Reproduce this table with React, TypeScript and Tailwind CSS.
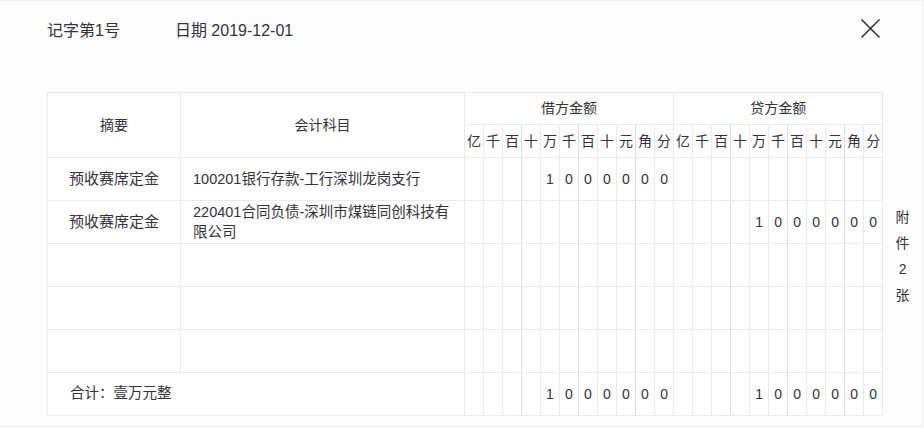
import React from "react";

const units = ["亿", "千", "百", "十", "万", "千", "百", "十", "元", "角", "分"];

// border-right colour of a unit column (index 0..10)
function unitBorder(i: number, last: boolean) {
  if (last) return "border-r-[#e6e9ee]";
  if (i === 2 || i === 5) return "border-r-[#cfe1f3]";
  if (i === 8) return "border-r-[#efd3d6]";
  return "border-r-[#e6e9ee]";
}

const amount = ["", "", "", "", "1", "0", "0", "0", "0", "0", "0"];
const empty = Array(11).fill("");

type Row = { summary: string; subject: string; debit: string[]; credit: string[] };

const rows: Row[] = [
  { summary: "预收赛席定金", subject: "100201银行存款-工行深圳龙岗支行", debit: amount, credit: empty },
  { summary: "预收赛席定金", subject: "220401合同负债-深圳市煤链同创科技有限公司", debit: empty, credit: amount },
  { summary: "", subject: "", debit: empty, credit: empty },
  { summary: "", subject: "", debit: empty, credit: empty },
  { summary: "", subject: "", debit: empty, credit: empty },
];

function AmountCells({ values, keyPrefix }: { values: string[]; keyPrefix: string }) {
  return (
    <>
      {values.map((v, i) => (
        <td
          key={keyPrefix + i}
          className={`w-[19px] border-b border-r border-b-[#e6e9ee] ${unitBorder(i, keyPrefix.startsWith("c") && i === 10)} text-center text-[14px] p-0`}
        >
          {v}
        </td>
      ))}
    </>
  );
}

export default function App() {
  return (
    <div
      className="w-[923px] h-[427px] bg-[#fdfdfe] border-t border-r border-b border-[#eef0f4] text-[#35313a]"
      style={{ fontFamily: '"Liberation Sans", "Noto Sans CJK SC", sans-serif' }}
    >
      <div className="h-[59px] flex items-center pl-[47px] pr-[41px] text-[16px]">
        <span>记字第1号</span>
        <span className="ml-[55px]">日期 2019-12-01</span>
        <button className="ml-auto self-start mt-[17px] w-[21px] h-[21px] flex items-center justify-center">
          <svg width="21" height="21" viewBox="0 0 21 21" fill="none" stroke="#35313a" strokeWidth="1.6">
            <line x1="1.5" y1="1.5" x2="19.5" y2="19.5" />
            <line x1="19.5" y1="1.5" x2="1.5" y2="19.5" />
          </svg>
        </button>
      </div>
      <div className="flex pl-[47px] mt-[32px]">
        <table className="border-separate border-spacing-0 table-fixed w-[835px] border-t border-l border-[#e6e9ee] bg-white">
          <colgroup>
            <col className="w-[133px]" />
            <col className="w-[284px]" />
            {Array.from({ length: 22 }).map((_, i) => (
              <col key={i} className="w-[19px]" />
            ))}
          </colgroup>
          <thead>
            <tr className="h-[32px]">
              <th rowSpan={2} className="font-normal text-[14px] border-b border-r border-[#e6e9ee]">摘要</th>
              <th rowSpan={2} className="font-normal text-[14px] border-b border-r border-[#e6e9ee]">会计科目</th>
              <th colSpan={11} className="font-normal text-[14px] border-b border-r border-[#e6e9ee]">借方金额</th>
              <th colSpan={11} className="font-normal text-[14px] border-b border-r border-[#e6e9ee]">贷方金额</th>
            </tr>
            <tr className="h-[33px]">
              {units.map((u, i) => (
                <th key={"du" + i} className={`font-normal text-[14px] p-0 border-b border-r border-b-[#e6e9ee] ${unitBorder(i, false)}`}>
                  {u}
                </th>
              ))}
              {units.map((u, i) => (
                <th key={"cu" + i} className={`font-normal text-[14px] p-0 border-b border-r border-b-[#e6e9ee] ${unitBorder(i, i === 10)}`}>
                  {u}
                </th>
              ))}
            </tr>
          </thead>
          <tbody>
            {rows.map((r, ri) => (
              <tr key={ri} className="h-[43px]">
                <td className="text-center text-[15px] border-b border-r border-[#e6e9ee]">{r.summary}</td>
                <td className="text-[14.5px] leading-[20px] pl-[12px] pr-[12px] border-b border-r border-[#e6e9ee]">{r.subject}</td>
                <AmountCells values={r.debit} keyPrefix={"d" + ri} />
                <AmountCells values={r.credit} keyPrefix={"c" + ri} />
              </tr>
            ))}
            <tr className="h-[43px]">
              <td colSpan={2} className="text-[14.5px] pl-[22px] border-b border-r border-[#e6e9ee]">合计：壹万元整</td>
              <AmountCells values={amount} keyPrefix="dt" />
              <AmountCells values={amount} keyPrefix="ct" />
            </tr>
          </tbody>
        </table>
        <div className="w-[41px] flex flex-col items-center pt-[112px] text-[14px] leading-[26px]">
          <span>附</span>
          <span>件</span>
          <span>2</span>
          <span>张</span>
        </div>
      </div>
    </div>
  );
}
